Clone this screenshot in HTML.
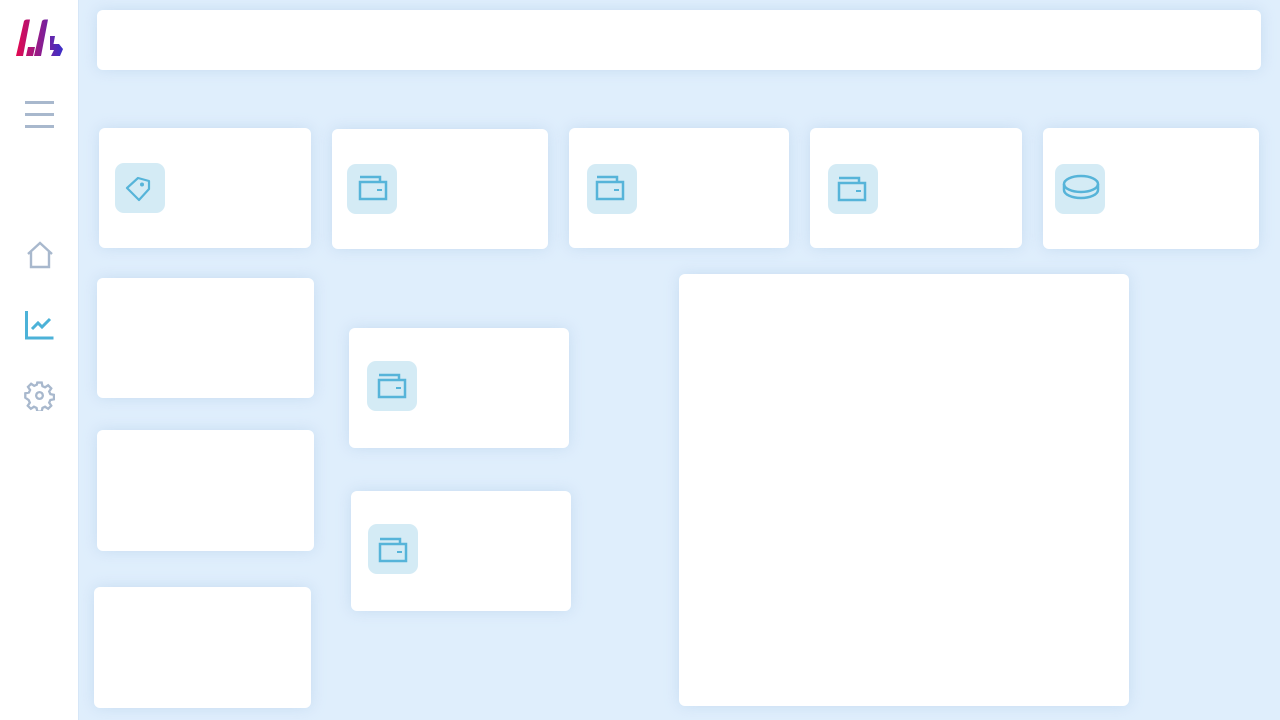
<!DOCTYPE html>
<html><head><meta charset="utf-8"><style>
*{margin:0;padding:0;box-sizing:border-box}
body{width:1280px;height:720px;overflow:hidden;background:#dfeefc;font-family:"Liberation Sans",sans-serif;position:relative}
.side{position:absolute;left:0;top:0;width:79px;height:720px;background:#fff;border-right:1px solid #d6e6f7}
.c{position:absolute;background:#fff;border-radius:6px;box-shadow:0 0 14px rgba(170,200,230,.45)}
.ic{position:absolute;width:50px;height:50px;border-radius:9px;background:#d4ebf5}
.ic svg{position:absolute;left:0;top:0}
</style></head><body>
<div class="side">
<svg style="position:absolute;left:0;top:0" width="79" height="70" viewBox="0 0 79 70">
<defs><linearGradient id="g" x1="16" x2="63" gradientUnits="userSpaceOnUse"><stop offset="0" stop-color="#e4084f"/><stop offset="1" stop-color="#3b2fc9"/></linearGradient></defs>
<path fill="url(#g)" d="M24 21q1-1.5 3-1.5h3L23 56h-7z M28 47h7l-2 9h-7z M42 21q1-1.5 3-1.5h3L41 56h-7z M50 36h5l-1.5 8H59l4 5-3 7h-9l3-6h-4z"/>
</svg>
<svg style="position:absolute;left:25px;top:101px" width="29" height="27"><g fill="#a8b8cd"><rect y="0" width="29" height="3"/><rect y="12" width="29" height="3"/><rect y="24" width="29" height="3"/></g></svg>
<svg style="position:absolute;left:25px;top:241px" width="30" height="28" viewBox="0 0 30 28"><path d="M3 13L15 2l12 11M6 11v15h18V11" fill="none" stroke="#a8b8cd" stroke-width="2.4"/></svg>
<svg style="position:absolute;left:25px;top:310px" width="30" height="30" viewBox="0 0 30 30"><path d="M1.5 1v27h27M7 19l6-6 4 4 8-8" fill="none" stroke="#4cb2d8" stroke-width="3"/></svg>
<svg style="position:absolute;left:24px;top:380px" width="31" height="31" viewBox="0 0 24 24"><path fill="none" stroke="#a8b8cd" stroke-width="1.8" d="M10.3 2h3.4l.6 2.8 2 .9 2.4-1.6 2.4 2.4-1.6 2.4.9 2 2.8.6v3.4l-2.8.6-.9 2 1.6 2.4-2.4 2.4-2.4-1.6-2 .9-.6 2.8h-3.4l-.6-2.8-2-.9-2.4 1.6-2.4-2.4 1.6-2.4-.9-2L1 13.7v-3.4l2.8-.6.9-2-1.6-2.4 2.4-2.4 2.4 1.6 2-.9z"/><circle cx="12" cy="12" r="2.6" fill="none" stroke="#a8b8cd" stroke-width="1.8"/></svg>
</div>
<div class="c" style="left:97px;top:10px;width:1164px;height:60px"></div>

<div class="c" style="left:99px;top:128px;width:212px;height:120px"></div>
<div class="c" style="left:332px;top:129px;width:216px;height:120px"></div>
<div class="c" style="left:569px;top:128px;width:220px;height:120px"></div>
<div class="c" style="left:810px;top:128px;width:212px;height:120px"></div>
<div class="c" style="left:1043px;top:128px;width:216px;height:121px"></div>
<div class="c" style="left:97px;top:278px;width:217px;height:120px"></div>
<div class="c" style="left:97px;top:430px;width:217px;height:121px"></div>
<div class="c" style="left:94px;top:587px;width:217px;height:121px"></div>
<div class="c" style="left:349px;top:328px;width:220px;height:120px"></div>
<div class="c" style="left:351px;top:491px;width:220px;height:120px"></div>
<div class="c" style="left:679px;top:274px;width:450px;height:432px"></div>

<div class="ic" style="left:115px;top:163px"><svg width="50" height="50"><path d="M12 25L23 15l11 3v8L24 37z" fill="none" stroke="#56b4d9" stroke-width="2.2" stroke-linejoin="round"/><circle cx="27" cy="21.5" r="2" fill="#56b4d9"/></svg></div>
<div class="ic" style="left:347px;top:164px"><svg width="50" height="50"><g fill="none" stroke="#56b4d9" stroke-width="2.5"><path d="M13 13h20v5"/><rect x="13" y="18" width="26" height="17"/></g><rect x="30" y="25" width="5" height="2" fill="#56b4d9"/></svg></div>
<div class="ic" style="left:587px;top:164px"><svg width="50" height="50"><g fill="none" stroke="#56b4d9" stroke-width="2.5"><path d="M10 13h20v5"/><rect x="10" y="18" width="26" height="17"/></g><rect x="27" y="25" width="5" height="2" fill="#56b4d9"/></svg></div>
<div class="ic" style="left:828px;top:164px"><svg width="50" height="50"><g fill="none" stroke="#56b4d9" stroke-width="2.5"><path d="M11 14h20v5"/><rect x="11" y="19" width="26" height="17"/></g><rect x="28" y="26" width="5" height="2" fill="#56b4d9"/></svg></div>
<div class="ic" style="left:1055px;top:164px"><svg width="50" height="50"><g fill="none" stroke="#56b4d9" stroke-width="2.5"><ellipse cx="26" cy="20" rx="17" ry="8"/><path d="M9 20v6c0 4.4 7.6 8 17 8s17-3.6 17-8v-6"/></g></svg></div>
<div class="ic" style="left:367px;top:361px"><svg width="50" height="50"><g fill="none" stroke="#56b4d9" stroke-width="2.5"><path d="M12 14h20v5"/><rect x="12" y="19" width="26" height="17"/></g><rect x="29" y="26" width="5" height="2" fill="#56b4d9"/></svg></div>
<div class="ic" style="left:368px;top:524px"><svg width="50" height="50"><g fill="none" stroke="#56b4d9" stroke-width="2.5"><path d="M12 15h20v5"/><rect x="12" y="20" width="26" height="17"/></g><rect x="29" y="27" width="5" height="2" fill="#56b4d9"/></svg></div>
</body></html>
